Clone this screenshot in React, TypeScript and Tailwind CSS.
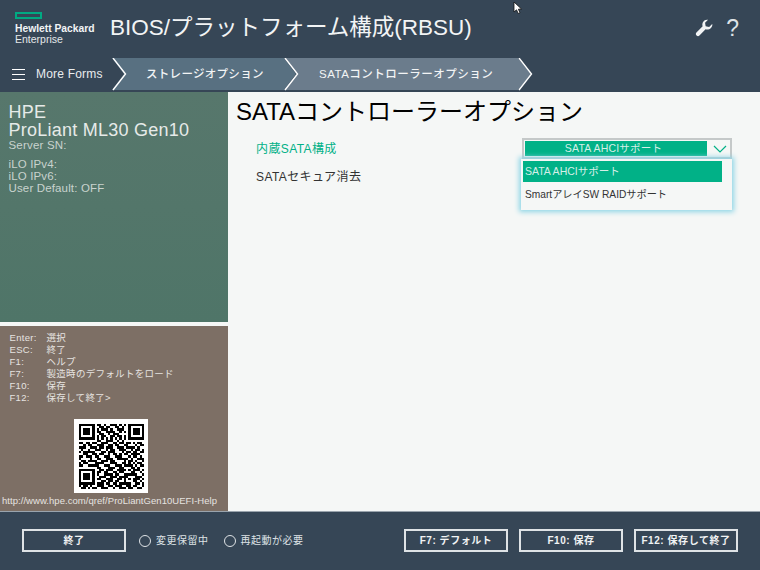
const QR = [
"11111110110100111010101111111",
"10000010011011001101001000001",
"10111010101110100111001011101",
"10111010110011110010101011101",
"10111010011001011100001011101",
"10000010101100110110101000001",
"11111110101010101010101111111",
"00000000110011100101000000000",
"11011011001110011011011010110",
"00101100111001101100110001011",
"11100111011011100111011110100",
"01001001110010110011100101101",
"10111110001101110001011011011",
"00110011011001011010110111100",
"11011101100111001110001011010",
"10000100110011100111110100111",
"01101111001110110000101101001",
"10110001111000111001101010110",
"11001111100111001110111101011",
"00000000110001110011000110100",
"11111110011011100111101011101",
"10000010110110011011000110010",
"10111010100111101100111111001",
"10111010011100111011110001110",
"10111010110011100110101011101",
"10000010001101101100100011010",
"11111110111011011011111001101",
"10110100111001101110011011001",
"01101011001110010011101100110",
];

function FooterButton({ label, className }: { label: string; className: string }) {
  return (
    <button className={`h-[23px] border-2 border-[#dfe3e6] text-[10px] font-bold tracking-[0.55px] text-[#f1f3f4] ${className}`}>
      {label}
    </button>
  );
}

function Status({ label }: { label: string }) {
  return (
    <div className="flex items-center gap-[5px] text-[10px] tracking-[0.5px] text-[#dfe3e6]">
      <span className="h-[12px] w-[12px] rounded-full border-[1.5px] border-[#dfe3e6]" />
      {label}
    </div>
  );
}

function Chevron({ className }: { className: string }) {
  return (
    <svg width="15" height="34" viewBox="0 0 15 34" className={`absolute top-0 ${className}`} fill="none">
      <path d="M1 0 L13.5 16 L1 32" stroke="#ffffff" strokeWidth="1.4" />
    </svg>
  );
}

const keys = [
  ["Enter:", "選択"],
  ["ESC:", "終了"],
  ["F1:", "ヘルプ"],
  ["F7:", "製造時のデフォルトをロード"],
  ["F10:", "保存"],
  ["F12:", "保存して終了>"],
];

export default function App() {
  return (
    <div className="flex h-[570px] w-[760px] flex-col overflow-hidden bg-[#f5f7f6] font-['Liberation_Sans','Noto_Sans_CJK_JP',sans-serif]">
      <header className="relative h-[92px] shrink-0 bg-[#364656] text-white">
        <div className="flex h-[58px] items-start">
          <div className="ml-[15px] mt-[12px] w-[85px]">
            <div className="h-[7px] w-[27px] border-2 border-[#01a982]" />
            <div className="mt-[4px] text-[10.3px] font-bold leading-[11px] text-[#f2f4f5]">Hewlett Packard</div>
            <div className="text-[10.5px] leading-[11px] text-[#e4e8ea]">Enterprise</div>
          </div>
          <h1 className="ml-[10px] mt-[14px] text-[22.5px] leading-[28px] text-[#f2f4f5]">BIOS/プラットフォーム構成(RBSU)</h1>
          <div className="ml-auto mr-[21px] mt-[15px] flex items-center gap-[13px]">
            <svg width="18" height="18" viewBox="0 0 24 24" fill="#f2f4f5">
              <path d="M23 6.6a6.6 6.6 0 0 1-8.9 7.1L5.9 22a2.8 2.8 0 0 1-4-3.9l8.3-8.3A6.6 6.6 0 0 1 17.4 1l-4 4 .8 4.7 4.7.8 4-4z" />
            </svg>
            <span className="text-[23px] leading-[26px] text-[#dfe3e6]">?</span>
          </div>
        </div>
        <svg width="10" height="14" viewBox="0 0 10 14" className="absolute left-[513px] top-[1px]">
          <path d="M1 1 L1 11 L3.5 8.8 L5.2 12.5 L7 11.7 L5.4 8.2 L8.5 8 Z" fill="#fff" stroke="#111" strokeWidth="0.8" />
        </svg>
        <nav className="flex h-[34px] items-stretch">
          <div className="flex w-[112px] items-center pb-[2px] pl-[12px]">
            <span className="flex w-[13px] flex-col gap-[4px]">
              <i className="h-px bg-white" />
              <i className="h-px bg-white" />
              <i className="h-px bg-white" />
            </span>
            <span className="ml-[11px] text-[12px] font-medium tracking-[0.2px] text-[#e9ecee]">More Forms</span>
          </div>
          <div className="relative w-[172px]">
            <div className="flex h-[32px] w-[184px] items-center bg-[#587081] pl-[34px] pt-[1px] text-[11.5px] font-medium tracking-[0.3px] text-[#f2f4f5] [clip-path:polygon(0_0,172px_0,184px_50%,172px_100%,0_100%,12px_50%)]">
              ストレージオプション
            </div>
            <Chevron className="left-0" />
          </div>
          <div className="relative w-[234px]">
            <div className="flex h-[32px] w-[247px] items-center bg-[#6b7c8c] pl-[35px] pt-[1px] text-[11.5px] font-medium tracking-[0.5px] text-[#f2f4f5] [clip-path:polygon(0_0,234px_0,247px_50%,234px_100%,0_100%,13px_50%)]">
              SATAコントローラーオプション
            </div>
            <Chevron className="left-0" />
            <Chevron className="left-[234px]" />
          </div>
        </nav>
      </header>

      <div className="flex min-h-0 flex-1">
        <aside className="flex w-[228px] shrink-0 flex-col gap-[4px]">
          <div className="h-[230px] bg-[linear-gradient(180deg,#57776c,#4f7568)] pl-[8.5px] pt-[11px] text-[#e6eae8]">
            <div className="text-[18px] leading-[18px] tracking-[0.25px]">
              HPE
              <br />
              ProLiant ML30 Gen10
            </div>
            <div className="text-[11.5px] leading-[12px] tracking-[0.2px] text-[#c9d3ce]">Server SN:</div>
            <div className="mt-[7px] text-[11.5px] leading-[12px] tracking-[0.15px] text-[#c9d3ce]">
              iLO IPv4:
              <br />
              iLO IPv6:
              <br />
              User Default: OFF
            </div>
          </div>
          <div className="flex flex-1 flex-col bg-[#7d6f65] pt-[6px] text-[#e6e3e0]">
            <div className="pl-[9.5px] text-[9.5px] leading-[12px] tracking-[0.3px]">
              {keys.map(([k, v]) => (
                <div key={k} className="flex">
                  <span className="w-[37px] shrink-0">{k}</span>
                  <span>{v}</span>
                </div>
              ))}
            </div>
            <div className="ml-[74px] mt-[15px] h-[74px] w-[74px] bg-white p-[4.5px]">
              <svg width="65" height="65" viewBox="0 0 29 29" shapeRendering="crispEdges">
                {QR.flatMap((row, y) =>
                  row.split("").map((c, x) => (c === "1" ? <rect key={`${x}-${y}`} x={x} y={y} width="1" height="1" fill="#000" /> : null)),
                )}
              </svg>
            </div>
            <div className="mt-[1px] pl-[2px] text-[9.5px] leading-[14px] tracking-[0.05px] text-[#e6e3e0]">http://www.hpe.com/qref/ProLiantGen10UEFI-Help</div>
          </div>
        </aside>

        <main className="relative flex-1 pl-[8px] text-black">
          <h2 className="mt-[5px] text-[24px] leading-[30px]">SATAコントローラーオプション</h2>
          <div className="mt-[11px] flex items-start pl-[20px]">
            <div className="w-[266px] pt-[3px] text-[12px] leading-[16px] tracking-[0.4px] text-[#01b187]">内蔵SATA構成</div>
            <div className="flex h-[21px] w-[210px] items-center border-2 border-[#c5c9c9] bg-[#f5f7f6] p-[1px]">
              <div className="flex h-[15px] w-[182px] items-center justify-center bg-[#01b187] pr-[5px] text-[10.5px] tracking-[0.2px] text-[#d6efe8]">SATA AHCIサポート</div>
              <svg width="14" height="8" viewBox="0 0 14 8" className="ml-[6px]" fill="none">
                <path d="M1 1 L7 7 L13 1" stroke="#01b187" strokeWidth="1.2" />
              </svg>
            </div>
          </div>
          <div className="mt-[10px] pl-[20px] text-[12px] leading-[16px] tracking-[0.4px] text-[#333]">SATAセキュア消去</div>
          <div className="absolute left-[293px] top-[67px] h-[51px] w-[211px] bg-[#f5f7f6] pl-[2px] pt-[2px] text-[10.5px] shadow-[0_0_5px_2px_#8fd6e6]">
            <div className="flex h-[21px] w-[199px] items-center bg-[#01b187] pl-[2px] text-[#d6efe8]">SATA AHCIサポート</div>
            <div className="flex h-[26px] items-center pl-[2px] text-[10.2px] text-[#333]">SmartアレイSW RAIDサポート</div>
          </div>
        </main>
      </div>

      <footer className="flex h-[59px] shrink-0 items-center border-t border-[#9aa4ad] bg-[#364656] pb-[1px] pl-[22px]">
        <FooterButton label="終了" className="w-[104px]" />
        <div className="ml-[13px] flex gap-[15px]">
          <Status label="変更保留中" />
          <Status label="再起動が必要" />
        </div>
        <div className="ml-auto mr-[22px] flex gap-[11px]">
          <FooterButton label="F7: デフォルト" className="w-[104px]" />
          <FooterButton label="F10: 保存" className="w-[104px]" />
          <FooterButton label="F12: 保存して終了" className="w-[104px]" />
        </div>
      </footer>
    </div>
  );
}
